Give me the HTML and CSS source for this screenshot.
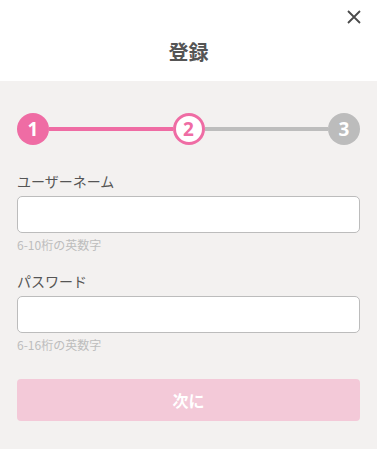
FILE: index.html
```html
<!DOCTYPE html>
<html lang="ja">
<head>
<meta charset="utf-8">
<link rel="stylesheet" href="styles.css">
</head>
<body>
<div class="modal">
  <header class="header">
    <button class="close" aria-label="close">
      <svg width="14" height="14" viewBox="0 0 14 14"><path d="M1 1L13 13M13 1L1 13" stroke="#4a4a4a" stroke-width="1.8" fill="none"/></svg>
    </button>
    <h1 class="title">登録</h1>
  </header>
  <main class="body">
    <div class="stepper">
      <div class="step done">1</div>
      <div class="line active"></div>
      <div class="step current">2</div>
      <div class="line"></div>
      <div class="step todo">3</div>
    </div>
    <div class="field">
      <label class="label">ユーザーネーム</label>
      <input class="input" type="text">
      <div class="hint">6-10桁の英数字</div>
    </div>
    <div class="field">
      <label class="label">パスワード</label>
      <input class="input" type="password">
      <div class="hint">6-16桁の英数字</div>
    </div>
    <button class="next">次に</button>
  </main>
</div>
</body>
</html>
```
FILE: styles.css
```css
html, body {
  margin: 0;
  padding: 0;
  background: #f3f1f0;
}
body {
  font-family: "Noto Sans CJK JP", "Noto Sans", sans-serif;
  color: #555;
}
.modal {
  width: 377px;
  min-height: 449px;
  background: #f3f1f0;
}
.header {
  position: relative;
  height: 81px;
  background: #fff;
  display: flex;
  align-items: flex-start;
  justify-content: center;
}
.close {
  position: absolute;
  right: 16px;
  top: 10px;
  width: 14px;
  height: 14px;
  padding: 0;
  border: 0;
  background: none;
  display: flex;
}
.title {
  margin: 0;
  margin-top: 38px;
  font-size: 20px;
  line-height: 28px;
  font-weight: 700;
  color: #555;
}
.body {
  padding: 32px 17px 27px 17px;
}
.stepper {
  display: flex;
  align-items: center;
  height: 32px;
}
.step {
  width: 32px;
  height: 32px;
  box-sizing: border-box;
  border-radius: 50%;
  display: flex;
  align-items: center;
  justify-content: center;
  font-family: "Noto Sans", sans-serif;
  font-weight: 700;
  font-size: 19px;
  line-height: 1;
  flex: none;
}
.step.done {
  background: #ef6ca4;
  color: #fff;
}
.step.current {
  background: #fff;
  border: 3px solid #ef6ca4;
  color: #ef6ca4;
}
.step.todo {
  background: #bcbcbc;
  color: #fff;
}
.line {
  flex: 1;
  height: 4px;
  background: #bdbdbd;
}
.line.active {
  background: #ef6ca4;
}
.field {
  display: flex;
  flex-direction: column;
  margin-top: 26px;
}
.field + .field {
  margin-top: 18px;
}
.label {
  font-size: 14px;
  line-height: 20px;
  color: #555;
}
.input {
  margin-top: 5px;
  height: 37px;
  box-sizing: border-box;
  border: 1px solid #bcbcbc;
  border-radius: 5px;
  background: #fff;
  padding: 0 10px;
  font-size: 14px;
}
.hint {
  margin-top: 4px;
  font-size: 12px;
  line-height: 16px;
  color: #bdbdbd;
}
.next {
  margin-top: 26px;
  width: 100%;
  height: 42px;
  border: 0;
  border-radius: 4px;
  background: #f3c9d8;
  color: #fff;
  font-family: "Noto Sans CJK JP", sans-serif;
  font-size: 16px;
  font-weight: 700;
  display: block;
}
```
